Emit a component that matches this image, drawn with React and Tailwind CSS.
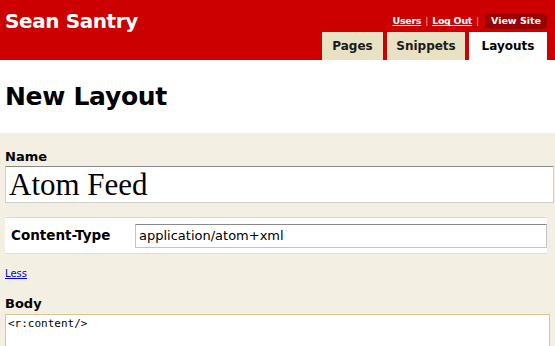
import React from 'react';

const tabs = [
  { name: 'Pages', width: 'w-[61px]', active: false },
  { name: 'Snippets', width: 'w-[78px]', active: false },
  { name: 'Layouts', width: 'w-[78px]', active: true },
];

export default function App() {
  return (
    <div className="w-[555px] h-[346px] overflow-hidden bg-white font-['DejaVu_Sans',sans-serif]">
      {/* Header */}
      <div className="h-[60px] bg-[#cc0000] flex justify-between items-stretch pl-[5px] pr-[8px]">
        <h1 className="text-[20px] font-bold text-white leading-none pt-[11px] tracking-[-0.4px]">Sean Santry</h1>
        <div className="flex flex-col items-end">
          <div className="flex items-center h-[32px] pt-[14px] pb-[3px] text-[9.5px] text-white tracking-[-0.3px]">
            <a className="underline font-bold">Users</a>
            <span className="text-[#f2a0a0] mx-[4px]">|</span>
            <a className="underline font-bold">Log Out</a>
            <span className="text-[#f2a0a0] mx-[4px]">|</span>
            <span className="ml-[2px] w-[62px] h-[15px] flex items-center justify-center bg-[#990000] rounded-[4px] font-bold tracking-normal">View Site</span>
          </div>
          <div className="flex gap-[4px] h-[28px]">
            {tabs.map((t) => (
              <div
                key={t.name}
                className={`flex items-center justify-center text-[12px] font-bold ${t.width} ${t.active ? 'bg-white text-black' : 'bg-[#e8e1c4] text-[#1a1a1a]'}`}
              >
                {t.name}
              </div>
            ))}
          </div>
        </div>
      </div>

      {/* Title */}
      <div className="h-[73px] flex items-center px-[5px]">
        <h2 className="text-[25px] font-bold text-black tracking-[-0.3px]">New Layout</h2>
      </div>

      {/* Form area */}
      <div className="bg-[#f3efe2] px-[5px] pt-[17px] h-[213px]">
        <label className="block text-[13px] font-bold text-black leading-none mb-[3px]">Name</label>
        <div className="h-[37px] mr-[-4px] bg-white border border-[#cfcfcf] border-t-[#8a8a8a] flex items-center px-[3px] font-['Liberation_Serif',serif] text-[31px] text-black leading-none">
          Atom Feed
        </div>

        <div className="mt-[14px] mr-[3px] bg-white border-y border-[#e2dccb] h-[37px] flex items-center pl-[6px]">
          <span className="w-[124px] text-[13.5px] font-bold text-black">Content-Type</span>
          <div className="flex-1 h-[24px] border border-[#c4c4c4] border-t-[#8a8a8a] flex items-center px-[3px] text-[13px] text-black">
            application/atom+xml
          </div>
        </div>

        <a className="block mt-[15px] text-[10px] text-[#0000ee] underline leading-none">Less</a>

        <label className="block mt-[18px] text-[13px] font-bold text-black leading-none mb-[4px]">Body</label>
        <div className="h-[40px] bg-white border border-[#d6c894] px-[2px] pt-[1px] font-['DejaVu_Sans_Mono',monospace] text-[11px] text-black">
          {'<r:content/>'}
        </div>
      </div>
    </div>
  );
}
